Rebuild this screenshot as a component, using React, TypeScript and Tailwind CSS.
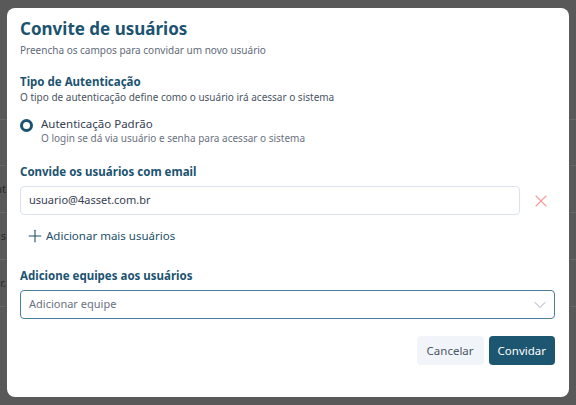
import { Plus, X, ChevronDown } from "lucide-react"

const bgRows = [
  { h: "h-[120px]", text: "" },
  { h: "h-[46px]", text: "" },
  { h: "h-[47px]", text: "nt" },
  { h: "h-[47px]", text: "s" },
  { h: "h-[47px]", text: "r." },
]

export default function App() {
  return (
    <div
      className="relative h-[405px] w-[576px] overflow-hidden bg-[#595959]"
      style={{ fontFamily: '"Noto Sans", "Open Sans", sans-serif' }}
    >
      {/* Dimmed page behind the modal */}
      <div className="flex flex-col">
        {bgRows.map((row, i) => (
          <div
            key={i}
            className={`${row.h} flex items-center justify-end border-b border-[#666666] pr-[570px] text-[11px] text-[#2a2a2a]`}
          >
            {row.text}
          </div>
        ))}
      </div>

      {/* Modal */}
      <div className="absolute left-[7px] top-[8px] flex h-[389px] w-[562px] flex-col rounded-[8px] bg-white pl-[13px] pr-[14px] pt-[9px]">
        <h1 className="text-[17px] font-bold leading-[24px] text-[#1b5371]">Convite de usuários</h1>
        <p className="mt-[2px] text-[10px] leading-[14px] text-[#5f6b7a]">
          Preencha os campos para convidar um novo usuário
        </p>

        <h2 className="mt-[17px] text-[11.5px] font-bold leading-[16px] text-[#1b5371]">
          Tipo de Autenticação
        </h2>
        <p className="text-[10px] leading-[14px] text-[#4b5563]">
          O tipo de autenticação define como o usuário irá acessar o sistema
        </p>

        <div className="mt-[12px] flex items-start gap-[8px]">
          <span className="mt-[3px] size-[13px] shrink-0 rounded-full border-[3px] border-[#1b5371]" />
          <div className="flex flex-col">
            <span className="text-[11.5px] leading-[16px] text-[#374151]">Autenticação Padrão</span>
            <span className="text-[10px] leading-[13px] text-[#6b7280]">
              O login se dá via usuário e senha para acessar o sistema
            </span>
          </div>
        </div>

        <h2 className="mt-[19px] text-[11.5px] font-bold leading-[16px] text-[#1b5371]">
          Convide os usuários com email
        </h2>

        <div className="mt-[6px] flex items-center">
          <div className="flex h-[29px] w-[500px] items-center rounded-[4px] border border-[#dde3ec] px-[8px] text-[11px] text-[#374151]">
            usuario@4asset.com.br
          </div>
          <X className="ml-[11px] size-[20px] text-[#f59a9a]" strokeWidth={1.3} />
        </div>

        <button className="mt-[11px] flex items-center gap-[1px] self-start pl-[5px] text-[11.5px] leading-[20px] text-[#1d4f6a]">
          <Plus className="size-[20px]" strokeWidth={1.3} />
          Adicionar mais usuários
        </button>

        <h2 className="mt-[22px] text-[11.5px] font-bold leading-[16px] text-[#1b5371]">
          Adicione equipes aos usuários
        </h2>

        <div className="mt-[6px] flex h-[29px] w-full items-center justify-between rounded-[4px] border border-[#4a7f9c] pl-[8px] pr-[4px] text-[11px] text-[#6b7280]">
          <span>Adicionar equipe</span>
          <ChevronDown className="size-[20px] text-[#a3adba]" strokeWidth={1.2} />
        </div>

        <div className="mt-[17px] flex justify-end gap-[5px]">
          <button className="h-[29px] rounded-[4px] bg-[#f1f5f9] px-[10px] text-[11.5px] text-[#4b5563]">
            Cancelar
          </button>
          <button className="h-[29px] rounded-[4px] bg-[#1d5670] px-[9px] text-[11.5px] text-white">
            Convidar
          </button>
        </div>
      </div>
    </div>
  )
}
